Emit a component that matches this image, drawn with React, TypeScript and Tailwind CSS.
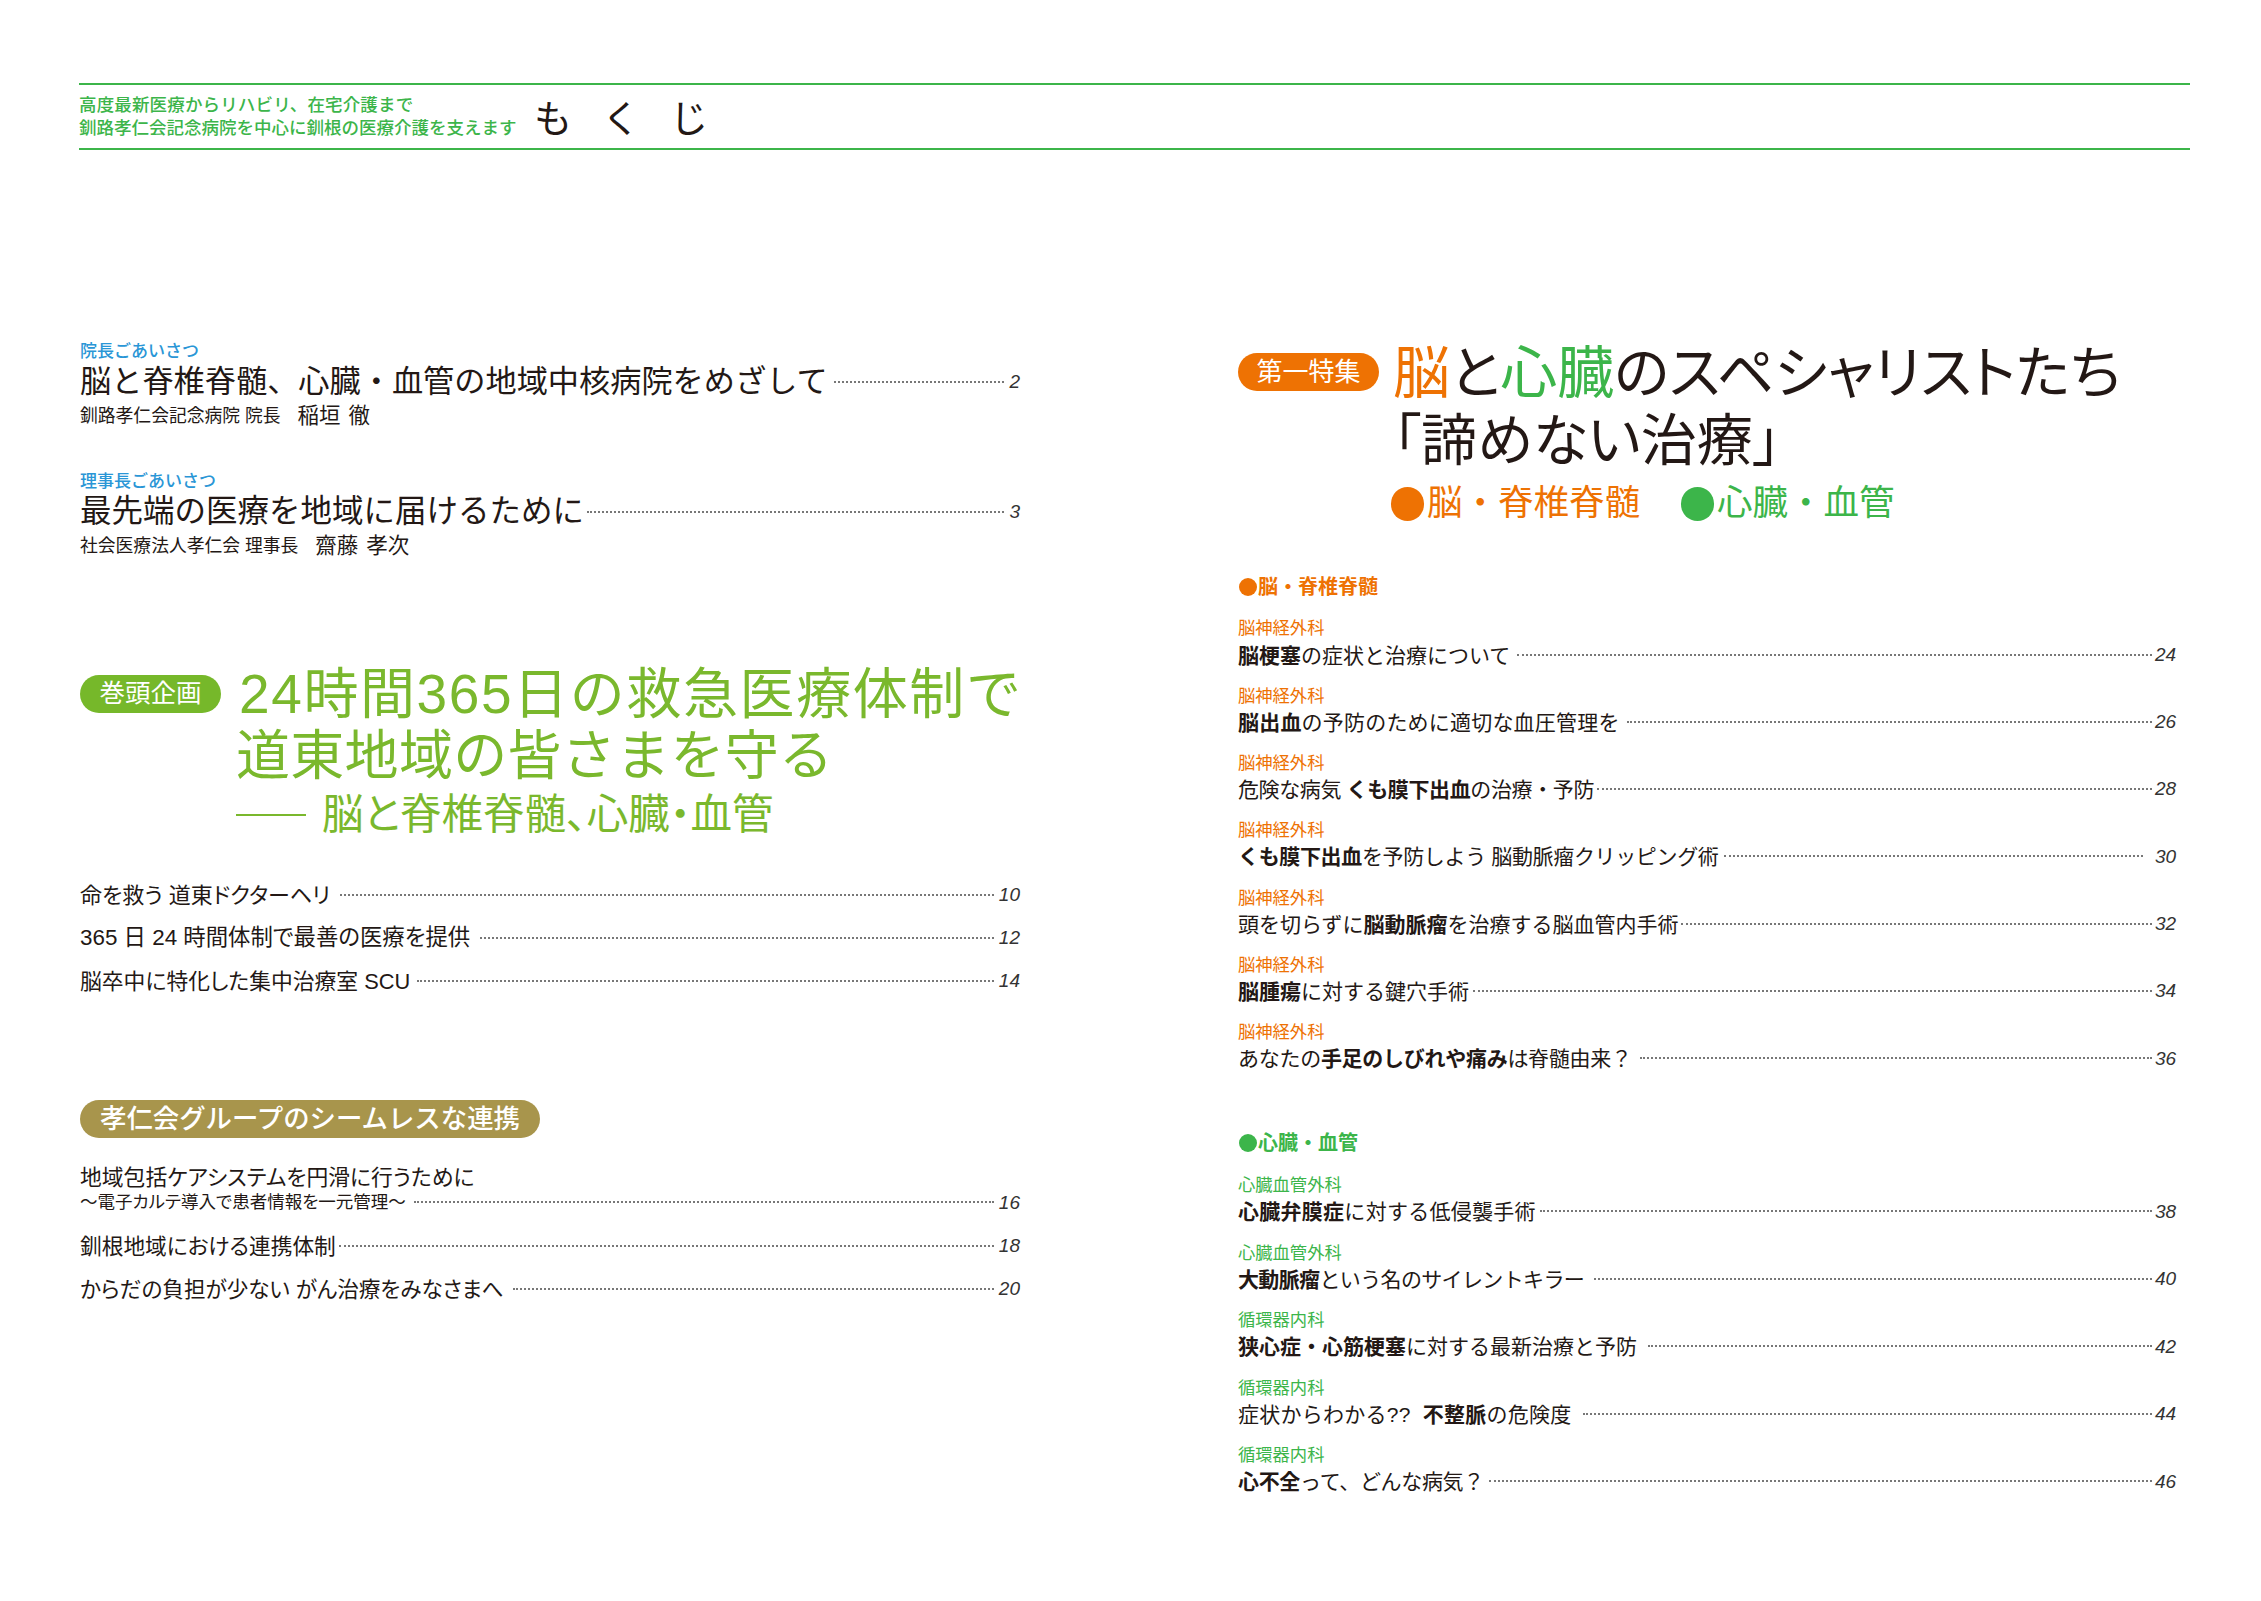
import React from 'react';

const orange = 'text-[#ee7203]';
const green = 'text-[#3cb54a]';

const Leader = ({ className = 'ml-2 mr-1' }: { className?: string }) => (
  <span className={`flex-1 border-t-2 border-dotted border-[#777] ${className}`} />
);

const Page = ({ n, className = 'w-[26px]' }: { n: string; className?: string }) => (
  <span className={`text-right text-[19px] italic font-['Liberation_Sans',sans-serif] text-[#333] ${className}`}>{n}</span>
);

// left page
const Greeting = ({ label, title, size, org, name, page, gap }: { label: string; title: string; size: string; org: string; name: string; page: string; gap: string }) => (
  <div>
    <div className="h-[21px] flex items-center text-[17px] font-medium leading-none text-[#2a96d6]">{label}</div>
    <div className="h-[40px] flex items-center">
      <span className={`${size} leading-none`}>{title}</span>
      <Leader className={`${gap} mr-[2px]`} />
      <Page n={page} className="w-[14px]" />
    </div>
    <div className="h-[30px] flex items-center leading-none">
      <span className="text-[17.8px]">{org}</span>
      <span className="text-[21.5px] ml-[17px] [word-spacing:2px]">{name}</span>
    </div>
  </div>
);

const Row = ({ text, page, gap, size = 'text-[22px]' }: { text: string; page: string; gap: string; size?: string }) => (
  <div className="h-[43px] flex items-center">
    <span className={`${size} leading-none [font-feature-settings:'palt']`}>{text}</span>
    <Leader className={`${gap} mr-0 -mt-[2px]`} />
    <Page n={page} />
  </div>
);

const Dot = ({ className }: { className: string }) => <span className={`inline-block shrink-0 rounded-full ${className}`} />;

// right page
const Item = ({ label, color, page, gap, pr, track, children }: { label: string; color: string; page: string; gap: string; pr?: string; track?: string; children: React.ReactNode }) => (
  <div className="pt-[1px]">
    <div className={`h-[26px] flex items-center text-[17.3px] leading-none ${color}`}>{label}</div>
    <div className="h-[26px] flex items-center">
      <span className={`text-[21px] leading-none whitespace-pre ${track ?? ''}`}>{children}</span>
      <Leader className={`${gap} ${pr ?? 'mr-[3px]'} -mt-[1px]`} />
      <Page n={page} className="w-[20px]" />
    </div>
  </div>
);

export default function App() {
  return (
    <div className="w-[2261px] h-[1601px] bg-white pt-[83px] pl-[79px] pr-[71px] text-[#231815] font-['Liberation_Sans','Noto_Sans_CJK_JP',sans-serif]">
      <header className="h-[67px] border-y-2 border-[#3cb54a] flex items-center">
        <div className="w-[455px] text-[17.5px] leading-[23px] font-medium text-[#3cb54a] whitespace-nowrap">
          <div className="tracking-[0.15px]">高度最新医療からリハビリ、在宅介護まで</div>
          <div>釧路孝仁会記念病院を中心に釧根の医療介護を支えます</div>
        </div>
        <div className="mt-[5px] text-[38px] leading-none tracking-[30px]">もくじ</div>
      </header>

      <main className="flex justify-between pr-[15px]">
        <section className="w-[941px] pl-[1px] pt-[191px]">
          <div className="flex flex-col gap-[39px]">
            <Greeting label="院長ごあいさつ" title="脳と脊椎脊髄、心臓・血管の地域中核病院をめざして" size="text-[31.2px]" org="釧路孝仁会記念病院 院長" name="稲垣 徹" page="2" gap="ml-[6px]" />
            <Greeting label="理事長ごあいさつ" title="最先端の医療を地域に届けるために" size="text-[31.5px]" org="社会医療法人孝仁会 理事長" name="齋藤 孝次" page="3" gap="ml-[3px]" />
          </div>

          <div className="flex items-start gap-[15px] mt-[102px]">
            <div className="mt-[11px] w-[141px] h-[38px] shrink-0 rounded-full bg-[#76b82a] flex items-center justify-center text-[25.5px] leading-none text-white">巻頭企画</div>
            <div className="text-[#7ab82d] leading-none">
              <div className="h-[60px] flex items-center text-[55px] tracking-[1.6px] pl-[3px] whitespace-nowrap">24時間365日の救急医療体制で</div>
              <div className="h-[64px] flex items-center text-[54px] tracking-[0.3px]">道東地域の皆さまを守る</div>
              <div className="h-[54px] flex items-center text-[41.5px] [font-feature-settings:'palt']">
                <span className="w-[70px] border-t-2 border-[#7ab82d] mr-[16px]" />
                脳と脊椎脊髄、心臓・血管
              </div>
            </div>
          </div>

          <div className="mt-[32px]">
            <Row text="命を救う 道東ドクターヘリ" page="10" gap="ml-[10px]" />
            <Row text="365 日 24 時間体制で最善の医療を提供" page="12" gap="ml-[10px]" size="text-[22.4px]" />
            <Row text="脳卒中に特化した集中治療室 SCU" page="14" gap="ml-[7px]" size="text-[21.8px]" />
          </div>

          <div className="mt-[97px] w-[460px] h-[38px] rounded-full bg-[#a8954c] flex items-center justify-center text-[26.4px] font-medium leading-none text-white">孝仁会グループのシームレスな連携</div>

          <div className="mt-[27px]">
            <div className="h-[26px] flex items-center text-[21.8px] leading-none [font-feature-settings:'palt']">地域包括ケアシステムを円滑に行うために</div>
            <div className="h-[24px] flex items-center">
              <span className="text-[17.5px] leading-none [font-feature-settings:'palt']">～電子カルテ導入で患者情報を一元管理～</span>
              <Leader className="ml-[8px] mr-0 -mt-[2px]" />
              <Page n="16" />
            </div>
            <div className="mt-[10px]">
              <Row text="釧根地域における連携体制" page="18" gap="ml-[3px]" size="text-[21.7px]" />
              <Row text="からだの負担が少ない がん治療をみなさまへ" page="20" gap="ml-[9px]" size="text-[21.6px]" />
            </div>
          </div>
        </section>

        <section className="w-[937px] pt-[189px]">
          <div className="flex items-start gap-[14px]">
            <div className="mt-[14px] w-[141px] h-[38px] shrink-0 rounded-full bg-[#ee7203] flex items-center justify-center text-[26px] leading-none text-white">第一特集</div>
            <div className="mt-[1px] leading-none">
              <div className="h-[66px] flex items-center text-[57px] whitespace-nowrap [font-feature-settings:'palt']">
                <span className={orange}>脳</span>と<span className={green}>心臓</span>のスペシャリストたち
              </div>
              <div className="h-[69px] flex items-center text-[56px] [font-feature-settings:'palt']">「諦めない治療」</div>
              <div className="h-[58px] -ml-[2px] flex items-center text-[35.5px] whitespace-nowrap">
                <span className={`flex items-center gap-[3px] ${orange}`}><Dot className="w-[33px] h-[34px] bg-[#ee7203]" />脳・脊椎脊髄</span>
                <span className={`flex items-center gap-[3px] ml-[41px] ${green}`}><Dot className="w-[33px] h-[34px] bg-[#3cb54a]" />心臓・血管</span>
              </div>
            </div>
          </div>

          <div className={`mt-[39px] h-[30px] flex items-center gap-[1px] text-[20px] font-bold leading-none ${orange}`}><Dot className="ml-[1px] w-[18px] h-[18px] bg-[#ee7203]" />脳・脊椎脊髄</div>
          <div className="mt-[13px] flex flex-col gap-[14.3px]">
            <Item label="脳神経外科" color={orange} page="24" gap="ml-[7px]"><b>脳梗塞</b>の症状と治療について</Item>
            <Item label="脳神経外科" color={orange} page="26" gap="ml-[7px]" track="tracking-[0.2px]"><b>脳出血</b>の予防のために適切な血圧管理を</Item>
            <Item label="脳神経外科" color={orange} page="28" gap="ml-[3px]" track="tracking-[-0.38px]">危険な病気 <b>くも膜下出血</b>の治療・予防</Item>
            <Item label="脳神経外科" color={orange} page="30" gap="ml-[6px]" pr="mr-[12px]" track="tracking-[-0.35px]"><b>くも膜下出血</b>を予防しよう 脳動脈瘤クリッピング術</Item>
            <Item label="脳神経外科" color={orange} page="32" gap="ml-[2px]">頭を切らずに<b>脳動脈瘤</b>を治療する脳血管内手術</Item>
            <Item label="脳神経外科" color={orange} page="34" gap="ml-[4px]"><b>脳腫瘍</b>に対する鍵穴手術</Item>
            <Item label="脳神経外科" color={orange} page="36" gap="ml-[8px]" track="tracking-[-0.28px]">あなたの<b>手足のしびれや痛み</b>は脊髄由来？</Item>
          </div>

          <div className={`mt-[56px] h-[30px] flex items-center gap-[1px] text-[20px] font-bold leading-none ${green}`}><Dot className="ml-[1px] w-[18px] h-[18px] bg-[#3cb54a]" />心臓・血管</div>
          <div className="mt-[14px] flex flex-col gap-[14.5px]">
            <Item label="心臓血管外科" color={green} page="38" gap="ml-[4px]" track="tracking-[0.27px]"><b>心臓弁膜症</b>に対する低侵襲手術</Item>
            <Item label="心臓血管外科" color={green} page="40" gap="ml-[10px]" track="tracking-[-0.64px]"><b>大動脈瘤</b>という名のサイレントキラー</Item>
            <Item label="循環器内科" color={green} page="42" gap="ml-[11px]"><b>狭心症・心筋梗塞</b>に対する最新治療と予防</Item>
            <Item label="循環器内科" color={green} page="44" gap="ml-[11px]" track="tracking-[0.25px]">症状からわかる??  <b>不整脈</b>の危険度</Item>
            <Item label="循環器内科" color={green} page="46" gap="ml-[5px]" track="tracking-[-0.33px]"><b>心不全</b>って、どんな病気？</Item>
          </div>
        </section>
      </main>
    </div>
  );
}
